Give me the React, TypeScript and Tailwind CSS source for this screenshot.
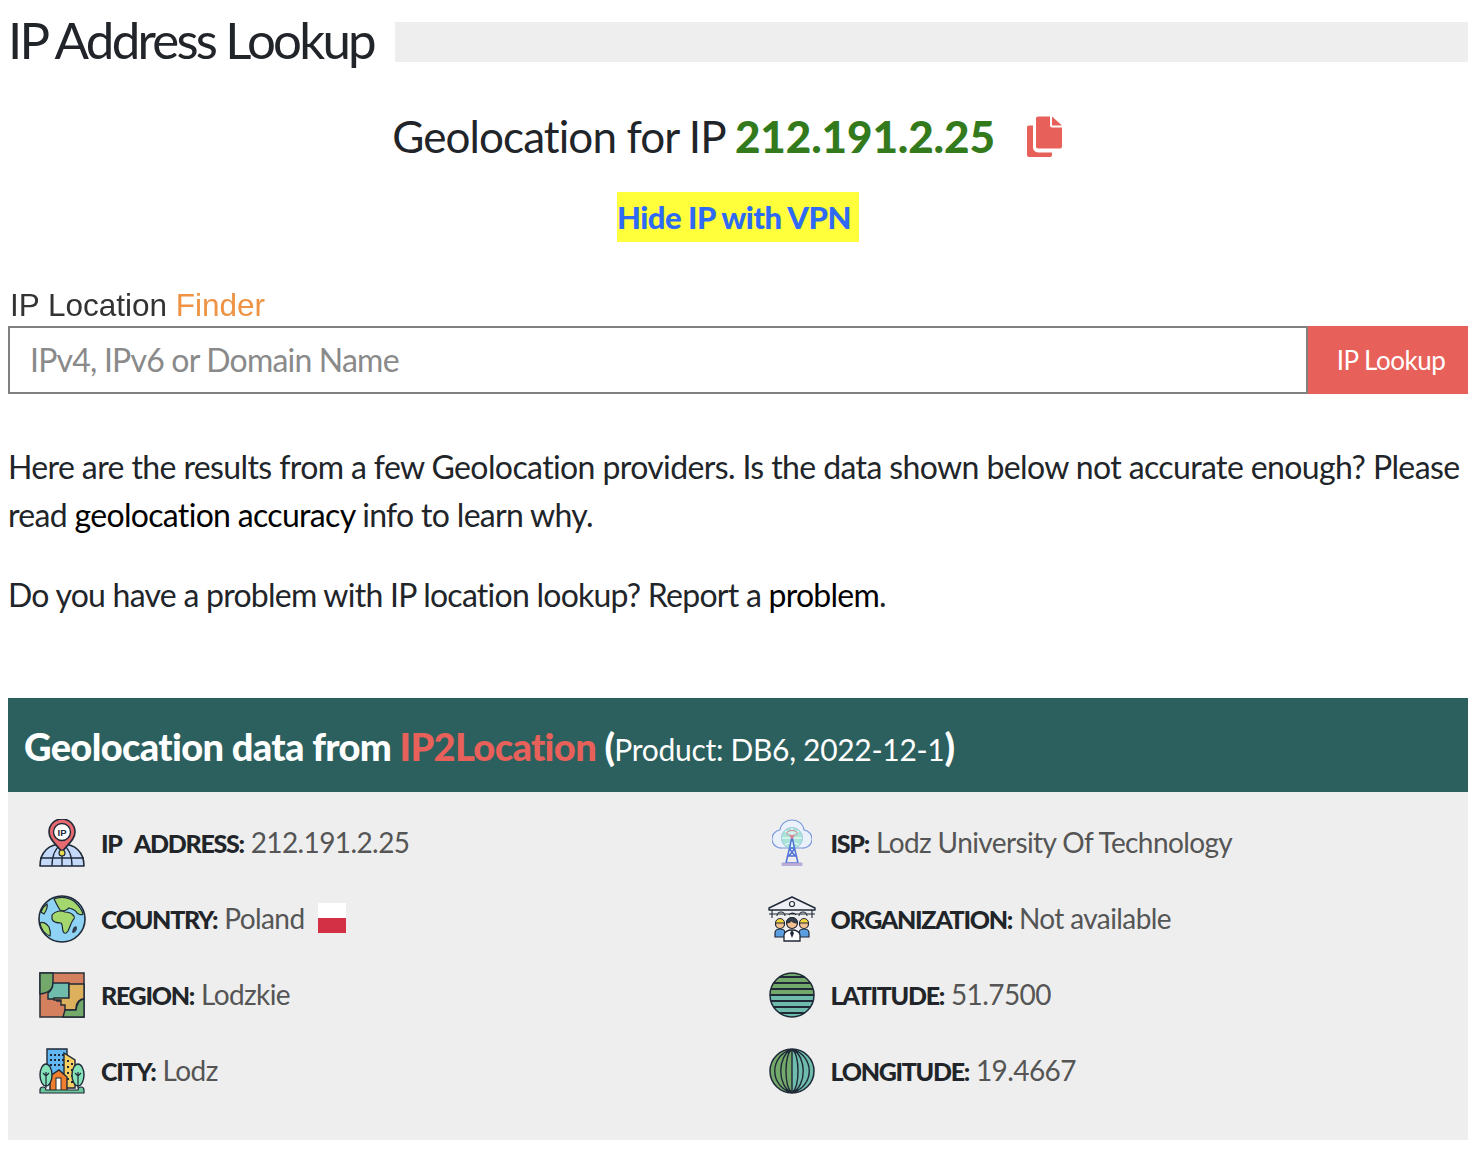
import React from "react";

const F = "font-['Lato','Noto_Sans',sans-serif]";

function PinIcon() {
  return (
    <svg width="48" height="50" viewBox="0 0 48 50" className="mt-[2px]">
      <path d="M2 47C2 33 11 25 24 25s22 8 22 22z" fill="#c5dafa" stroke="#1f2937" strokeWidth="1.6" strokeLinejoin="round" />
      <path d="M2 39h44M14 47c0-10 3-18 10-22M34 47c0-10-3-18-10-22M24 25v22" fill="none" stroke="#1f2937" strokeWidth="1.4" />
      <path d="M24 33C19 26 11 21 11 13a13 13 0 0 1 26 0c0 8-8 13-13 20z" fill="#e66a70" stroke="#1f2937" strokeWidth="1.6" />
      <circle cx="24" cy="13" r="8.500" fill="#fff" stroke="#1f2937" strokeWidth="1.4" />
      <circle cx="24" cy="34" r="3" fill="#e6d84e" stroke="#1f2937" strokeWidth="1.2" />
      <text x="24" y="16.500" textAnchor="middle" fontSize="9.500" fontWeight="700" fill="#1f2937" fontFamily="Liberation Sans">IP</text>
    </svg>
  );
}

function GlobeIcon() {
  return (
    <svg width="48" height="48" viewBox="0 0 48 48">
      <circle cx="24" cy="24" r="23" fill="#8fd3f4" stroke="#1f2937" strokeWidth="1.6" />
      <path d="M16 4c6-3 16-2 22 4 3 3 6 7 7 11-2 2-4 0-6-1-1-3-5-4-8-5-2 2-6 4-9 2-2-3-4-7-6-11z" fill="#a4d86e" stroke="#1f2937" strokeWidth="1.2" />
      <path d="M14 20c3-4 9-5 13-3 3 0 6 1 8 3 2 2 2 3 0 5-2 3-3 7-5 11-2 3-4 3-5 0-1-3 0-6-2-8-3 0-8-1-9-4z" fill="#a4d86e" stroke="#1f2937" strokeWidth="1.2" />
      <path d="M2 28c3-2 7 1 9 4 1 3 2 6 1 9-5-2-9-7-10-13zM3 17c1-3 3-6 6-8 1 3-1 7-3 10z" fill="#a4d86e" stroke="#1f2937" strokeWidth="1.2" />
      <path d="M36 32c1-1 3-1 3 1s-2 5-4 5 0-5 1-6z" fill="#33404d" />
    </svg>
  );
}

function RegionIcon() {
  return (
    <svg width="46" height="46" viewBox="0 0 46 46">
      <rect x="1" y="1" width="44" height="44" fill="#d4805f" stroke="#33383d" strokeWidth="1.6" />
      <path d="M1 1h13v10c0 6-5 10-13 11z" fill="#74a96c" stroke="#1f2937" strokeWidth="1.4" />
      <path d="M30 11H14c0 5-3 9-5 10v6h9v2h12z" fill="#6fbbac" stroke="#1f2937" strokeWidth="1.4" />
      <path d="M30 12h15v15c-4 0-8 3-8 9v2H26v-5h-4v-5h-7v-2h15z" fill="#dcb05c" stroke="#1f2937" strokeWidth="1.4" />
      <path d="M45 27v18H24l2-7h11c1-6 3-11 8-11z" fill="#74a96c" stroke="#1f2937" strokeWidth="1.4" />
    </svg>
  );
}

function CityIcon() {
  return (
    <svg width="46" height="46" viewBox="0 0 46 46">
      <path d="M8 1h20v26H8z" fill="#62b7f2" stroke="#1f2937" strokeWidth="1.4" />
      <path d="M25 5l11 7v28H25z" fill="#f6cf63" stroke="#1f2937" strokeWidth="1.4" />
      <g fill="#1f2937">
        <rect x="11" y="6" width="2" height="2" /><rect x="15" y="6" width="2" height="2" /><rect x="19" y="6" width="2" height="2" /><rect x="23" y="6" width="2" height="2" />
        <rect x="11" y="11" width="2" height="2" /><rect x="15" y="11" width="2" height="2" /><rect x="19" y="11" width="2" height="2" /><rect x="23" y="11" width="2" height="2" />
        <rect x="11" y="16" width="2" height="2" /><rect x="15" y="16" width="2" height="2" /><rect x="19" y="16" width="2" height="2" /><rect x="23" y="16" width="2" height="2" />
        <rect x="28" y="12" width="2" height="2" /><rect x="28" y="18" width="2" height="2" /><rect x="28" y="24" width="2" height="2" /><rect x="28" y="30" width="2" height="2" /><rect x="32" y="15" width="2" height="2" /><rect x="32" y="21" width="2" height="2" /><rect x="32" y="27" width="2" height="2" /><rect x="32" y="33" width="2" height="2" />
      </g>
      <path d="M11 44V28l9-6 8 7v15z" fill="#ef7f2e" stroke="#1f2937" strokeWidth="1.4" />
      <rect x="17" y="30" width="5" height="14" fill="#fff" stroke="#1f2937" strokeWidth="1" />
      <ellipse cx="7" cy="27" rx="6" ry="11" fill="#86e3b9" stroke="#1f2937" strokeWidth="1.4" />
      <ellipse cx="39" cy="27" rx="6" ry="11" fill="#86e3b9" stroke="#1f2937" strokeWidth="1.4" />
      <path d="M7 24v16M4 25l3 3 3-3M39 24v16M36 25l3 3 3-3" fill="none" stroke="#1f2937" strokeWidth="1.2" />
      <path d="M1 45v-3a3 3 0 0 1 6 0h32a3 3 0 0 1 6 0v3z" fill="#6cc79c" stroke="#1f2937" strokeWidth="1.2" />
    </svg>
  );
}

function IspIcon() {
  return (
    <svg width="40" height="48" viewBox="0 0 40 48">
      <path d="M10 29a9 9 0 0 1-2-18c1-7 7-10 12-10s11 3 12 10a9 9 0 0 1-2 18z" fill="#eaf1fb" stroke="#7a97dd" strokeWidth="1.2" />
      <circle cx="20" cy="19" r="10.500" fill="#a9e4d8" stroke="#9cc8da" strokeWidth="1" />
      <path d="M10 19h20M20 9v20M13 12c4 3 10 3 14 0M13 26c4-3 10-3 14 0" fill="none" stroke="#fff" strokeWidth="1" />
      <ellipse cx="20" cy="14" rx="5" ry="2.500" fill="none" stroke="#d98b96" strokeWidth="1" />
      <path d="M20 18l-6 26h12zM17 29h6M15.500 37h9M17 29l6 8M23 29l-6 8" fill="none" stroke="#4f72d9" strokeWidth="1.5" />
      <circle cx="20" cy="18" r="1.800" fill="#d97f93" />
      <rect x="10" y="44" width="20" height="2.500" fill="#c7a8cf" stroke="#8f9fde" strokeWidth=".6" />
    </svg>
  );
}

function OrgIcon() {
  return (
    <svg width="50" height="48" viewBox="0 0 50 48">
      <path d="M2 13L25 2l23 11v2H2z" fill="#eef0f5" stroke="#1f2937" strokeWidth="1.4" strokeLinejoin="round" />
      <circle cx="25" cy="9" r="2.500" fill="#fff" stroke="#1f2937" strokeWidth="1.2" />
      <path d="M5 15v8M45 15v8M10 21a4 4 0 0 1 8 0M22 20a4 4 0 0 1 7 0M32 21a4 4 0 0 1 8 0M2 19h46" fill="none" stroke="#1f2937" strokeWidth="1.1" />
      <circle cx="13" cy="29" r="4.500" fill="#f5c08f" stroke="#1f2937" strokeWidth="1.2" />
      <circle cx="37" cy="29" r="4.500" fill="#f5c08f" stroke="#1f2937" strokeWidth="1.2" />
      <path d="M8.500 28a4.500 4.500 0 0 1 9 0zM32.500 28a4.500 4.500 0 0 1 9 0z" fill="#f4d43e" stroke="#1f2937" strokeWidth="1" />
      <path d="M8 42v-4c0-3 3-4 5-4s5 1 5 4v4zM32 42v-4c0-3 3-4 5-4s5 1 5 4v4z" fill="#5a9fe0" stroke="#1f2937" strokeWidth="1.2" />
      <circle cx="25" cy="28" r="5.500" fill="#f5c08f" stroke="#1f2937" strokeWidth="1.2" />
      <path d="M19.500 28a5.500 5.500 0 0 1 11 0c-3 0-5-1-6-2-1 1-3 2-5 2z" fill="#39404d" stroke="#1f2937" strokeWidth="1" />
      <path d="M17 46v-6c0-3 4-5 8-5s8 2 8 5v6z" fill="#fff" stroke="#1f2937" strokeWidth="1.3" />
      <path d="M25 35l-2 3 2 5 2-5z" fill="#1f2937" />
    </svg>
  );
}

function LatIcon() {
  return (
    <svg width="46" height="46" viewBox="0 0 46 46">
      <defs>
        <clipPath id="latc"><circle cx="23" cy="23" r="22" /></clipPath>
      </defs>
      <g clipPath="url(#latc)">
        <rect width="46" height="23" fill="#74a96c" />
        <rect y="23" width="46" height="23" fill="#6fbbac" />
        <path d="M0 5h46M0 11h46M0 17h46M0 23h46M0 29h46M0 35h46M0 41h46" stroke="#1f2937" strokeWidth="1.8" />
      </g>
      <circle cx="23" cy="23" r="22" fill="none" stroke="#1f2937" strokeWidth="1.5" />
    </svg>
  );
}

function LonIcon() {
  return (
    <svg width="46" height="46" viewBox="0 0 46 46">
      <defs>
        <clipPath id="lonc"><circle cx="23" cy="23" r="22" /></clipPath>
      </defs>
      <g clipPath="url(#lonc)">
        <rect width="23" height="46" fill="#74a96c" />
        <rect x="23" width="23" height="46" fill="#6fbbac" />
        <path d="M23 0v46M23 1C8 8 8 38 23 45M23 1C15 8 15 38 23 45M23 1C31 8 31 38 23 45M23 1C38 8 38 38 23 45M23 1C0 8 0 38 23 45M23 1C46 8 46 38 23 45" fill="none" stroke="#1f2937" strokeWidth="1.4" />
      </g>
      <circle cx="23" cy="23" r="22" fill="none" stroke="#1f2937" strokeWidth="1.5" />
    </svg>
  );
}

function CopyIcon() {
  return (
    <svg width="37" height="41" viewBox="0 0 37 41" fill="#e8605a">
      <path d="M10 2.500a2 2 0 0 1 2-2h12v9a2 2 0 0 0 2 2h10v19a2 2 0 0 1-2 2H12a2 2 0 0 1-2-2z" />
      <path d="M26 .5l10 9H26z" />
      <path d="M1 11.500a2 2 0 0 1 2-2h4v22a5 5 0 0 0 5 5h14v2.500a2 2 0 0 1-2 2H3a2 2 0 0 1-2-2z" />
    </svg>
  );
}

function Row({ icon, label, value, flag }: { icon: React.ReactNode; label: string; value: string; flag?: boolean }) {
  return (
    <div className="flex items-center h-[76px]">
      <div className="w-[50px] flex justify-center shrink-0">{icon}</div>
      <div className="ml-[14px] mt-[-2px] text-[28px] tracking-[-0.6px] text-[#555] whitespace-nowrap flex items-baseline">
        <strong className="text-[#212529] font-black text-[25px] tracking-[-1.3px] [word-spacing:9px]">{label}:</strong>
        <span className="ml-[7px]">{value}</span>
        {flag && (
          <span className="ml-[14px] w-[28px] h-[30px] flex flex-col self-center">
            <span className="h-[15px] bg-white" />
            <span className="h-[15px] bg-[#d32f45]" />
          </span>
        )}
      </div>
    </div>
  );
}

export default function App() {
  return (
    <div className={`${F} w-[1460px] ml-2 bg-white text-[#212529] h-[1154px] overflow-hidden`}>
      <div className="flex items-start h-[84px]">
        <h1 className="text-[51px] font-normal tracking-[-2.75px] leading-[80px] whitespace-nowrap">IP Address Lookup</h1>
        <div className="ml-auto mt-[22px] w-[1073px] h-[40px] bg-[#eeeeee]" />
      </div>
      <div className="flex justify-center items-center mt-[20px] h-[64px] text-[44px] leading-none whitespace-nowrap pr-[21px]">
        <span className="tracking-[-0.9px]">Geolocation for IP&nbsp;</span>
        <strong className="text-[#327a1c] font-black tracking-[-0.1px]">212.191.2.25</strong>
        <span className="ml-[31px] flex"><CopyIcon /></span>
      </div>
      <div className="flex justify-center mt-[-8px] pt-[32px]">
        <a className="bg-[#ffff3c] text-[#2f6af5] font-black text-[31px] tracking-[-0.5px] leading-[50px] h-[50px] pr-[8px]">Hide IP with VPN</a>
      </div>
      <div className="mt-[44px] pl-[2px] h-[40px] text-[31.5px] leading-[38px] font-['Liberation_Sans',sans-serif] text-[#333] blur-[0.4px]">
        IP Location <span className="text-[#ee9344]">Finder</span>
      </div>
      <div className="flex h-[68px]">
        <div className="flex-1 border-2 border-[#808080] flex items-center pl-5 text-[32px] tracking-[-0.8px] text-[#8a8a8a]">IPv4, IPv6 or Domain Name</div>
        <button className="w-[160px] pl-[6px] bg-[#e8605a] text-white text-[26px] tracking-[-0.5px]">IP Lookup</button>
      </div>
      <div className="mt-[49px] text-[32px] leading-[48px] text-[#212529] whitespace-nowrap">
        <p className="tracking-[-0.61px]">Here are the results from a few Geolocation providers. Is the data shown below not accurate enough? Please</p>
        <p className="tracking-[-0.68px]">read <a className="text-black">geolocation accuracy</a> info to learn why.</p>
        <p className="mt-[32px] tracking-[-0.75px]">Do you have a problem with IP location lookup? Report a <a className="text-black">problem</a>.</p>
      </div>
      <div className="mt-[79px] h-[94px] bg-[#2c605e] pl-4 text-white font-black text-[38px] tracking-[-0.65px] leading-[96px] whitespace-nowrap">
        Geolocation data from <span className="text-[#e8605a]">IP2Location</span> (<span className="font-normal text-[30px] tracking-[-0.3px]">Product: DB6, 2022-12-1</span>)
      </div>
      <div className="bg-[#eeeeee] h-[348px] pt-[13px] grid grid-cols-2 pl-[29px]">
        <div>
          <Row icon={<PinIcon />} label="IP ADDRESS" value="212.191.2.25" />
          <Row icon={<GlobeIcon />} label="COUNTRY" value="Poland" flag />
          <Row icon={<RegionIcon />} label="REGION" value="Lodzkie" />
          <Row icon={<CityIcon />} label="CITY" value="Lodz" />
        </div>
        <div className="ml-[14px]">
          <Row icon={<IspIcon />} label="ISP" value="Lodz University Of Technology" />
          <Row icon={<OrgIcon />} label="ORGANIZATION" value="Not available" />
          <Row icon={<LatIcon />} label="LATITUDE" value="51.7500" />
          <Row icon={<LonIcon />} label="LONGITUDE" value="19.4667" />
        </div>
      </div>
    </div>
  );
}
